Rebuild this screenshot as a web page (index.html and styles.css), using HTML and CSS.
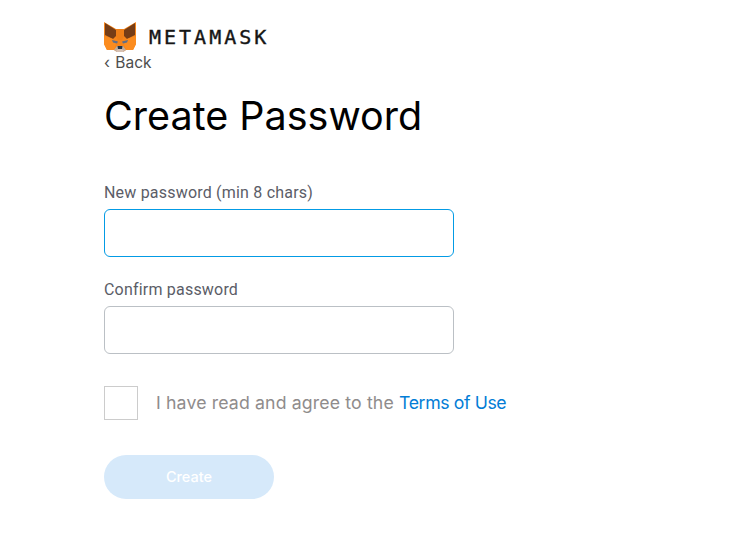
FILE: index.html
```html
<!DOCTYPE html>
<html lang="en">
<head>
<meta charset="utf-8">
<title>Create Password</title>
<link rel="stylesheet" href="styles.css">
</head>
<body>
<main class="page">
  <header class="brand">
    <svg class="fox" viewBox="0 0 32 30" width="32" height="30" aria-hidden="true">
      <polygon fill="#f6851b" points="0,0 12,7 20,7 32,0 32,12 32,22 29,28 22,28 19,30 13,30 10,28 3,28 0,22 0,12"/>
      <polygon fill="#763d16" points="1,1 12,8 12,14 9,17 1,13"/>
      <polygon fill="#763d16" points="31,1 20,8 20,14 23,17 31,13"/>
      <polygon fill="#f08018" points="12,7 20,7 20,14 18,18 14,18 12,14"/>
      <polygon fill="#fb8c1f" points="0,14 9,17 12,22 10,28 3,28 0,22"/>
      <polygon fill="#fb8c1f" points="32,14 23,17 20,22 22,28 29,28 32,22"/>
      <polygon fill="#5f6f8a" points="8,18 14,19.5 13,21.5 9,20.5"/>
      <polygon fill="#5f6f8a" points="24,18 18,19.5 19,21.5 23,20.5"/>
      <polygon fill="#c0ad9e" points="10,28 13,24 19,24 22,28 19,30 13,30"/>
      <polygon fill="#d7c1b3" points="12,29 14,27 18,27 20,29 19,30 13,30"/>
      <polygon fill="#233447" points="13.5,24 18.5,24 18,27 14,27"/>
    </svg>
    <span class="wordmark">METAMASK</span>
  </header>
  <a class="back" href="#">‹ Back</a>
  <h1 class="title">Create Password</h1>
  <form class="form">
    <label class="field">
      <span class="field-label">New password (min 8 chars)</span>
      <span class="input input-focus"></span>
    </label>
    <label class="field">
      <span class="field-label">Confirm password</span>
      <span class="input"></span>
    </label>
    <div class="terms">
      <span class="check"></span>
      <span class="terms-text">I have read and agree to the <a class="terms-link" href="#">Terms of Use</a></span>
    </div>
    <span class="create">Create</span>
  </form>
</main>
</body>
</html>
```
FILE: styles.css
```css
* { box-sizing: border-box; }
html, body { margin: 0; background: #fff; }
.page {
  padding: 22px 0 0 104px;
  font-family: Inter, "Liberation Sans", sans-serif;
}
.brand { display: flex; align-items: center; gap: 13px; height: 30px; }
.fox { flex: none; }
.wordmark {
  font-family: "DejaVu Sans Mono", monospace;
  font-weight: 400;
  font-size: 20px;
  letter-spacing: 3px;
  color: #161616;
  line-height: 30px;
  -webkit-text-stroke: 0.4px #161616;
}
.back {
  display: block;
  font-size: 15.5px;
  line-height: 22px;
  word-spacing: 1px;
  color: #4d4d4d;
  text-decoration: none;
}
.title {
  margin: 17px 0 0;
  font-weight: 400;
  font-size: 39.5px;
  line-height: 50px;
  color: #000;
}
.form { display: flex; flex-direction: column; margin-top: 39px; }
.field { display: flex; flex-direction: column; margin-bottom: 20px; }
.field-label {
  font-family: Roboto, sans-serif;
  font-size: 16px;
  letter-spacing: 0.2px;
  line-height: 26px;
  color: #5b5d67;
  margin-bottom: 3px;
}
.input {
  width: 350px;
  height: 48px;
  border: 1px solid #bbc0c5;
  border-radius: 6px;
}
.input-focus { border-color: #039be5; }
.terms { display: flex; align-items: center; gap: 18px; margin-top: 12px; }
.check { width: 34px; height: 34px; border: 1px solid #ccc; }
.terms-text {
  font-size: 17.7px;
  letter-spacing: 0.14px;
  padding-bottom: 2px;
  color: #8f8c8c;
}
.terms-link { color: #037dd6; letter-spacing: -0.4px; text-decoration: none; }
.create {
  margin-top: 35px;
  width: 170px;
  height: 44px;
  padding-bottom: 2px;
  border-radius: 22px;
  background: #d6e9fa;
  color: #fff;
  font-size: 14.5px;
  font-weight: 500;
  display: flex;
  align-items: center;
  justify-content: center;
}
```
